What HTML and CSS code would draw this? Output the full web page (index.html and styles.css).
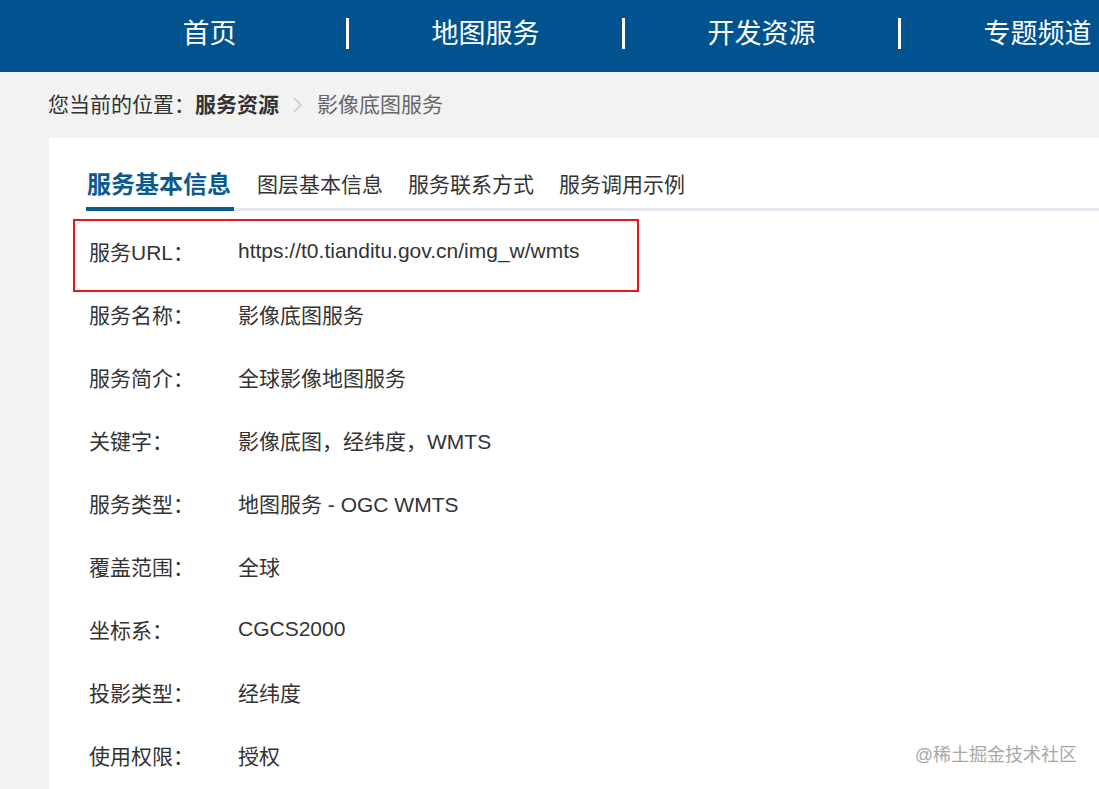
FILE: index.html
```html
<!DOCTYPE html>
<html lang="zh-CN">

<head>
    <meta charset="UTF-8">
    <meta name="viewport" content="width=device-width, initial-scale=1.0">
    <title>影像底图服务</title>
    <link rel="stylesheet" href="styles.css">
</head>

<body>
    <header class="header">
        <nav class="nav">
            <a class="nav-item">首页</a>
            <span class="nav-sep"></span>
            <a class="nav-item">地图服务</a>
            <span class="nav-sep"></span>
            <a class="nav-item">开发资源</a>
            <span class="nav-sep"></span>
            <a class="nav-item">专题频道</a>
        </nav>
    </header>

    <div class="breadcrumb">
        <span>您当前的位置：</span>
        <b class="crumb-strong">服务资源</b>
        <svg class="crumb-arrow" width="9" height="16" viewBox="0 0 9 16">
            <polyline points="1,1 8,8 1,15" fill="none" stroke="#c4c4c4" stroke-width="1.3" />
        </svg>
        <span class="crumb-current">影像底图服务</span>
    </div>

    <div class="panel">
        <div class="tabs">
            <div class="tab active">服务基本信息</div>
            <div class="tab">图层基本信息</div>
            <div class="tab">服务联系方式</div>
            <div class="tab">服务调用示例</div>
        </div>

        <div class="info">
            <div class="row"><span class="label">服务URL：</span><span class="value">https://t0.tianditu.gov.cn/img_w/wmts</span></div>
            <div class="row"><span class="label">服务名称：</span><span class="value">影像底图服务</span></div>
            <div class="row"><span class="label">服务简介：</span><span class="value">全球影像地图服务</span></div>
            <div class="row"><span class="label">关键字：</span><span class="value">影像底图，经纬度，WMTS</span></div>
            <div class="row"><span class="label">服务类型：</span><span class="value">地图服务 - OGC WMTS</span></div>
            <div class="row"><span class="label">覆盖范围：</span><span class="value">全球</span></div>
            <div class="row"><span class="label">坐标系：</span><span class="value">CGCS2000</span></div>
            <div class="row"><span class="label">投影类型：</span><span class="value">经纬度</span></div>
            <div class="row"><span class="label">使用权限：</span><span class="value">授权</span></div>
        </div>

        <div class="highlight"></div>
    </div>

    <div class="watermark">@稀土掘金技术社区</div>
</body>

</html>
```

FILE: styles.css
```css
body {
    margin: 0;
    font-family: "Liberation Sans", "Noto Sans CJK SC", sans-serif;
    background-color: #f2f2f2;
    color: #333;
    overflow: hidden;
    height: 789px;
}

.header {
    height: 72px;
    background-color: #00538f;
    border-bottom: 3px solid #eef1f6;
}

.nav {
    display: flex;
    align-items: center;
    height: 100%;
    padding-left: 73px;
    padding-bottom: 5px;
    box-sizing: border-box;
    overflow: hidden;
}

.nav-item {
    width: 273px;
    flex-shrink: 0;
    text-align: center;
    color: #fff;
    font-size: 27px;
    line-height: 32px;
}

.nav-sep {
    width: 3px;
    height: 31px;
    flex-shrink: 0;
    background-color: #fff;
}

.breadcrumb {
    display: flex;
    align-items: center;
    padding: 15px 0 18px 48px;
    font-size: 21px;
    line-height: 30px;
}

.crumb-strong {
    font-weight: bold;
    color: #333;
}

.crumb-arrow {
    margin: 0 15px 0 14px;
}

.crumb-current {
    color: #666;
}

.panel {
    position: relative;
    margin-left: 49px;
    height: 651px;
    background-color: #fff;
    padding-top: 25px;
    box-sizing: border-box;
    overflow: hidden;
}

.tabs {
    display: flex;
    align-items: flex-start;
    margin-left: 37px;
    border-bottom: 3px solid #e5e8ee;
}

.tab {
    font-size: 21px;
    line-height: 44px;
    margin-right: 25px;
    color: #333;
}

.tab.active {
    font-size: 24px;
    font-weight: bold;
    color: #0d5a8e;
    padding: 0 3px 0 1px;
    margin-right: 23px;
    border-bottom: 4px solid #0d5a8e;
    margin-bottom: -3px;
}

.info {
    margin-top: 8px;
    padding-left: 40px;
}

.row {
    display: flex;
    align-items: center;
    height: 63px;
    font-size: 21px;
}

.label {
    width: 149px;
    flex-shrink: 0;
}

.highlight {
    position: absolute;
    left: 24px;
    top: 81px;
    width: 566px;
    height: 73px;
    border: 2px solid #e8161c;
    box-sizing: border-box;
}

.watermark {
    position: absolute;
    right: 22px;
    top: 743px;
    font-size: 18px;
    line-height: 24px;
    color: #a8a8a8;
}
```
